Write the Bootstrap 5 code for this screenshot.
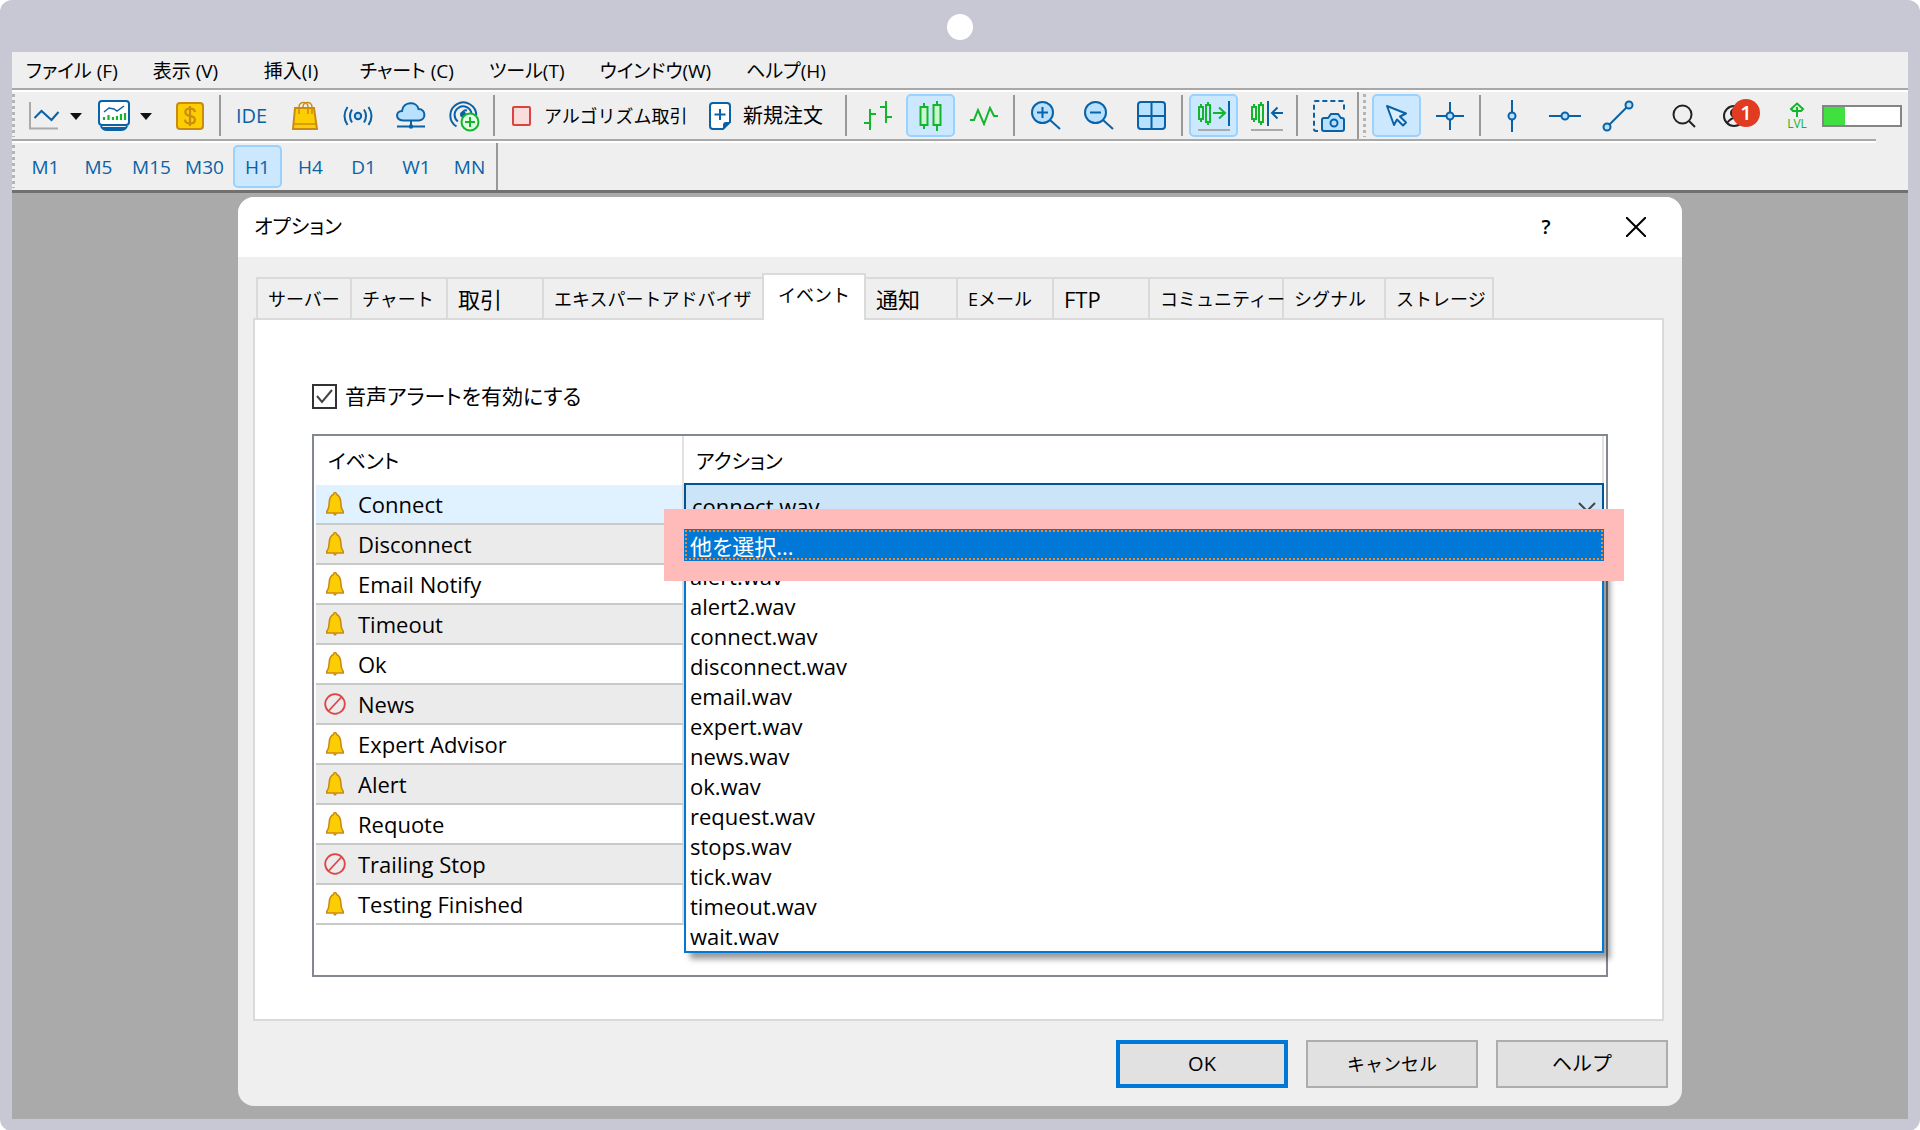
<!DOCTYPE html>
<html lang="ja">
<head>
<meta charset="utf-8">
<meta name="viewport" content="width=device-width, initial-scale=1">
<title>オプション</title>
<link rel="stylesheet" href="https://cdn.jsdelivr.net/npm/bootstrap@5.3.0/dist/css/bootstrap.min.css">
<style>
:root { --ui-blue: #0a62a6; --ui-face: #efefef; --ui-accent: #0078d7; }
body { background: #fff; color: #000; font-family: "Open Sans", "Noto Sans CJK JP", sans-serif; font-size: 20px; line-height: 30px; font-feature-settings: "palt"; }
button { color: inherit; }
svg { display: block; flex: none; }
.device { background: #c8c7d4; border-radius: 12px; padding: 0 12px 12px; }
.device-top { height: 52px; padding-top: 2px; }
.camera-dot { width: 26px; height: 26px; }
.screen { background: #aaa; }
.menubar { background: var(--ui-face); height: 36px; padding: 2px 14px 0; gap: 35px; font-size: 19px; }
.menubar a { color: #000; text-decoration: none; white-space: nowrap; }
.menubar .menu-view { min-width: 76px; }
.menubar .menu-insert { min-width: 61px; }
.toolrow { background: linear-gradient(#a8a8a8, #a8a8a8) 0 0 / 100% 2px no-repeat, linear-gradient(#fff, #fff) 0 2px / 100% 2px no-repeat, var(--ui-face); height: 51px; padding-top: 4px; }
.toolrow-short { background-size: calc(100% - 32px) 2px, calc(100% - 32px) 2px, auto; }
.toolrow-last { border-bottom: 3px solid #707070; height: 54px; }
.toolrow-last .tool { font-size: 19px; }
.grip { width: 3px; height: 43px; background: repeating-linear-gradient(#b4b4b4 0 3px, transparent 3px 6px); }
.tool { width: 49px; height: 43px; margin: 0 2px; padding: 0; border: 2px solid transparent; border-radius: 5px; background: none; display: flex; align-items: center; justify-content: center; flex: none; color: var(--ui-blue); white-space: nowrap; }
.tool.is-on { background: #cce8ff; border-color: #99d1ff; }
.tool-drop { width: 66px; justify-content: flex-start; padding-left: 1px; gap: 10px; }
.tool-text { color: #000; justify-content: flex-start; padding-left: 8px; gap: 10px; }
.tool-algo { width: 192px; padding-left: 9px; gap: 12px; font-size: 18px; }
.tool-order { width: 143px; padding-left: 10px; }
.vsep { width: 2px; height: 41px; background: #999; margin: 0 4px 0 3px; flex: none; }
.vsep-full { height: 47px; margin: 0 4px 0 2px; }
.note-badge { width: 28px; height: 28px; background: #e13b22; left: 18px; top: 3px; line-height: 28px; font-weight: 600; }
.lvl { color: #12b52c; font-size: 12px; line-height: 12px; width: 30px; margin: 0 10px 0 19px; }
.meter { width: 80px; height: 22px; border: 2px solid #858585; border-radius: 0; background: #fff; margin-right: 6px; }
.meter .progress-bar { background: #40e040; width: 27%; }
.workspace { padding: 4px 0 13px; }
.dialog { width: 100%; max-width: 1444px; background: var(--ui-face); border-radius: 16px; overflow: hidden; }
.dialog-title { background: #fff; height: 60px; padding: 0 36px 0 16px; }
.title-btn { border: 0; background: none; padding: 0; width: 20px; height: 30px; }
.title-actions { gap: 70px; }
.tabs { padding: 16px 0 0 3px; margin: 0 18px 0 15px; }
.tab { height: 41px; border: 2px solid #dadada; border-width: 2px 2px 0 0; background: var(--ui-face); padding: 0 0 0 10px; text-align: left; white-space: nowrap; flex: none; font-size: 18px; }
.tab-wide { font-size: 22px; }
.tab:first-child { border-left-width: 2px; }
.tab.active { height: 47px; margin: 0 0 -2px -2px; padding: 0 10px 6px 14px; background: #fff; border-left-width: 2px; position: relative; }
.w-a { width: 96px; } .w-b { width: 220px; } .w-c { width: 104px; } .w-d { width: 92px; } .w-e { width: 134px; } .w-f { width: 102px; } .w-g { width: 108px; }
.panel { background: #fff; border: 2px solid #dadada; margin: 0 18px 0 15px; padding: 64px 54px 42px 57px; }
.alert-check { width: 25px; height: 25px; margin: 0; border: 2px solid #333; border-radius: 0 !important; background-color: #fff; }
.alert-check:checked { background-color: #fff; border-color: #333; background-image: url("data:image/svg+xml,%3Csvg xmlns='http://www.w3.org/2000/svg' viewBox='0 0 21 21'%3E%3Cpath d='M3 10l5 6L18 4' fill='none' stroke='%23444' stroke-width='2'/%3E%3C/svg%3E"); background-size: 100%; }
.alert-label { font-size: 21px; }
.event-box { border: 2px solid #828790; min-height: 543px; margin-top: 25px; padding: 0 2px; }
.event-table { width: 100%; table-layout: fixed; border-collapse: separate; border-spacing: 0; font-size: 22px; }
.event-table th { height: 49px; font-weight: 400; font-size: 20px; padding: 2px 0 0 12px; border-right: 2px solid #e2e2e2; }
.event-table tbody td { height: 40px; padding: 0; border-bottom: 2px solid #c9c9c9; }
.event-table tbody td:first-child { border-right: 2px solid #dedede; padding-left: 8px; }
.event-table tbody tr:nth-child(even) td { background: #ebebeb; }
.event-table tbody tr:first-child td { background: #e0f1ff; }
.event-name { gap: 12px; line-height: 34px; }
.combo { left: 0; right: 0; top: -2px; font-size: 22px; }
.combo-select { width: 100%; height: 46px; border: 2px solid #005499; background: #cce4f7; padding: 0 6px; appearance: none; color: #000; display: block; }
.combo-arrow { right: 8px; top: 19px; pointer-events: none; }
.combo-list { border: 2px solid var(--ui-accent); background: #fff; box-shadow: 6px 6px 6px rgba(0,0,0,.4); }
.combo-list li { height: 30px; line-height: 31px; padding: 0 4px; }
.combo-list .picked { height: 32px; line-height: 34px; margin: -2px -2px 0; background: var(--ui-accent); color: #fff; box-shadow: 0 0 0 20px #ffbaba; position: relative; z-index: 1; padding: 0 6px; outline: 2px dotted #f08a30; outline-offset: -3px; }
.dlg-btn { width: 172px; height: 48px; background: #e1e1e1; border: 2px solid #adadad; border-radius: 0; padding: 0; }
.dlg-btn.is-default { border: 4px solid var(--ui-accent); }
.dlg-btn.is-cancel { font-size: 18px; }
.dialog-foot { gap: 18px; padding: 19px 14px 18px; }
</style>
<script src="https://cdn.jsdelivr.net/npm/bootstrap@5.3.0/dist/js/bootstrap.bundle.min.js"></script>
</head>
<body>
<svg width="0" height="0" class="position-absolute" aria-hidden="true">
  <symbol id="bell" viewBox="0 0 22 26"><path d="M11 1.500c1 0 1.500.8 1.600 1.900C15.500 4.500 16.700 7.500 16.800 12c.1 4 .6 6 2.400 8.500v1.500H2.800v-1.500C4.600 18 5.100 16 5.200 12 5.300 7.500 6.500 4.500 9.400 3.400 9.500 2.300 10 1.500 11 1.500z" fill="#fccd00" stroke="#c98c10" stroke-width="1.600"/><path d="M8.500 22.500h5L11 25z" fill="#c98c10"/></symbol>
  <symbol id="ban" viewBox="0 0 22 26"><circle cx="11" cy="13" r="9.800" fill="none" stroke="#e04545" stroke-width="1.800"/><path d="M4.500 20L17.500 6" stroke="#e04545" stroke-width="1.800"/></symbol>
</svg>
<div class="device">
  <div class="device-top d-flex align-items-center justify-content-center"><span class="camera-dot bg-white rounded-circle"></span></div>
  <div class="screen">
    <nav class="menubar d-flex align-items-center">
      <a href="#">ファイル (F)</a><a href="#" class="menu-view">表示 (V)</a><a href="#" class="menu-insert">挿入(I)</a><a href="#">チャート (C)</a><a href="#">ツール(T)</a><a href="#">ウインドウ(W)</a><a href="#">ヘルプ(H)</a>
    </nav>

    <div class="toolrow d-flex align-items-center">
      <span class="grip me-2"></span>
      <button class="tool tool-drop" aria-label="チャート種別"><svg width="32" height="32"><path d="M2 2v26.500h28" fill="none" stroke="#aaa" stroke-width="2"/><path d="M6.500 18l7-7 10 9 7-8" fill="none" stroke="#0a62a6" stroke-width="2"/></svg><svg width="12" height="8"><path d="M0 1h12L6 8z" fill="#111"/></svg></button>
      <button class="tool tool-drop" aria-label="インジケータ"><svg width="32" height="32"><rect x="1" y="1" width="30" height="24" rx="3" fill="#fff" stroke="#0a62a6" stroke-width="2"/><path d="M6 12l5-4 5 1 3 2 7-5" fill="none" stroke="#0a62a6" stroke-width="1.500"/><path d="M6 20v-3M10.500 20v-5M15 20v-3M19 20v-4M23 20v-6M27 20v-7" stroke="#12b52c" stroke-width="2.200"/><path d="M3 26c1 3 3 4 6 4h14c3 0 5-1 6-4M4 28h24" fill="none" stroke="#0a62a6" stroke-width="2"/></svg><svg width="12" height="8"><path d="M0 1h12L6 8z" fill="#111"/></svg></button>
      <button class="tool" aria-label="取引"><svg width="28" height="28"><rect x="1" y="1" width="26" height="26" rx="3" fill="#fccd00" stroke="#c98c10" stroke-width="2"/><path d="M19 10c-.5-2.500-2.500-3.500-5-3.500s-4.700 1.300-4.700 3.700c0 2.300 2 3.100 4.700 3.700 2.800.6 4.900 1.400 4.900 3.800s-2.200 3.800-4.900 3.800c-2.600 0-4.800-1.200-5.200-3.800M14 4v20" fill="none" stroke="#c98c10" stroke-width="2.200"/></svg></button>
      <span class="vsep"></span>
      <button class="tool">IDE</button>
      <button class="tool" aria-label="マーケット"><svg width="26" height="30"><path d="M3 7h19l3 21H1z" fill="#fccd00" stroke="#c98c10" stroke-width="2"/><path d="M7 13V6c0-6 9-6 9 0v7M11 8V6c0-6 9-6 9 0v7M2 23h22" fill="none" stroke="#c98c10" stroke-width="1.500"/></svg></button>
      <button class="tool" aria-label="シグナル"><svg width="30" height="20" fill="none" stroke="#0a62a6" stroke-width="2"><circle cx="15" cy="10" r="3.200" fill="#b8e0ff"/><path d="M9 3.500q-4 6.500 0 13M21 3.500q4 6.500 0 13M4.500 1q-6 9 0 18M25.500 1q6 9 0 18"/></svg></button>
      <button class="tool" aria-label="VPS"><svg width="30" height="28"><path d="M7 18.500C-1 18-.5 9 6 9 7-1 21-1 22.500 7c7.500 0 8 11 .5 11.500z" fill="#b8e0ff" stroke="#0a62a6" stroke-width="2"/><path d="M15 19v4M1 24.500h28" stroke="#0a62a6" stroke-width="2"/><circle cx="15" cy="24.500" r="2.200" fill="#0a62a6"/></svg></button>
      <button class="tool" aria-label="コミュニティ"><svg width="32" height="32" fill="none" stroke="#0a62a6" stroke-width="2"><path d="M8.500 26.500a13 13 0 1 1 19.800-11M9.800 21.500a8.500 8.500 0 1 1 13.700-8M14 14.500a4 4 0 0 1 5-4"/><circle cx="15" cy="14.500" r="2" fill="#0a62a6"/><circle cx="22" cy="22" r="8.500" fill="#e2ffe6" stroke="#12b52c"/><path d="M22 17v10M17 22h10" stroke="#12b52c"/></svg></button>
      <span class="vsep"></span>
      <button class="tool tool-text tool-algo"><svg width="20" height="20"><rect x="1" y="1" width="17" height="18" rx="1" fill="#fbdcdc" stroke="#d9443f" stroke-width="2"/></svg>アルゴリズム取引</button>
      <button class="tool tool-text tool-order"><svg width="24" height="28"><path d="M4 1h14q3 0 3 3v16l-7 7H4q-3 0-3-3V4q0-3 3-3z" fill="#fff" stroke="#0a62a6" stroke-width="2"/><path d="M21 20l-7 7v-4q0-3 3-3z" fill="#0a62a6"/><path d="M11 7v11M5.500 12.500h11" stroke="#0a62a6" stroke-width="2"/></svg>新規注文</button>
      <span class="vsep"></span>
      <button class="tool" aria-label="バーチャート"><svg width="28" height="30" fill="none" stroke="#12b52c" stroke-width="2"><path d="M0 22h6M6 8v21M6 13h6M16 6h6M22 0v22M22 16h6"/></svg></button>
      <button class="tool is-on" aria-label="ローソク足"><svg width="24" height="30" fill="#c9f7cf" stroke="#12b52c" stroke-width="2"><path d="M5 2v26M18 0v30"/><rect x="1.500" y="6" width="7" height="18"/><rect x="14.500" y="4" width="7" height="20"/></svg></button>
      <button class="tool" aria-label="ラインチャート"><svg width="28" height="20" fill="none" stroke="#12b52c" stroke-width="2"><path d="M0 14h4l4-10 6 14 6-16 4 8h4"/></svg></button>
      <span class="vsep"></span>
      <button class="tool" aria-label="拡大"><svg width="30" height="30" fill="none" stroke="#0a62a6" stroke-width="2"><circle cx="11.500" cy="11.500" r="10.500" fill="#b8e0ff"/><path d="M19 19l10 9M6 11.500h11M11.500 6v11"/></svg></button>
      <button class="tool" aria-label="縮小"><svg width="30" height="30" fill="none" stroke="#0a62a6" stroke-width="2"><circle cx="11.500" cy="11.500" r="10.500" fill="#b8e0ff"/><path d="M19 19l10 9M6 11.500h11"/></svg></button>
      <button class="tool" aria-label="整列"><svg width="30" height="30" fill="none" stroke="#0a62a6" stroke-width="2"><rect x="1" y="1" width="27" height="27" rx="3" fill="#b8e0ff"/><path d="M14.500 1v27M1 15h27"/></svg></button>
      <span class="vsep"></span>
      <button class="tool is-on" aria-label="自動スクロール"><svg width="32" height="32" fill="none" stroke="#12b52c" stroke-width="2"><path d="M3 4v3M3 19v3M10 2v3M10 22v3M15 13h11M21 7.500l6 5.500-6 5.500"/><rect x="1" y="7" width="4" height="12"/><rect x="8" y="5" width="4" height="17"/><path d="M31 1v25" stroke="#0a62a6"/><path d="M0 30h32" stroke="#aaa"/></svg></button>
      <button class="tool" aria-label="チャートシフト"><svg width="32" height="32" fill="none" stroke="#12b52c" stroke-width="2"><path d="M3 4v3M3 19v3M10 2v3M10 22v3"/><rect x="1" y="7" width="4" height="12"/><rect x="8" y="5" width="4" height="17"/><path d="M17 1v25M32 13H21M26.500 7.500L21 13l5.500 5.500" stroke="#0a62a6"/><path d="M0 30h32" stroke="#aaa"/></svg></button>
      <span class="vsep"></span>
      <button class="tool" aria-label="スクリーンショット"><svg width="32" height="32" fill="none" stroke="#0a62a6" stroke-width="2"><path d="M5 31H3q-2 0-2-2V3q0-2 2-2h26q2 0 2 2v9" stroke-dasharray="5 3"/><path d="M11 18h4l3-4h7l3 4h1q2 0 2 2v9q0 2-2 2H11q-2 0-2-2v-9q0-2 2-2z" fill="#b8e0ff"/><circle cx="21" cy="23" r="3.500"/></svg></button>
      <span class="vsep vsep-full"></span><span class="grip me-1"></span>
      <button class="tool is-on" aria-label="カーソル"><svg width="24" height="24" fill="#d9eeff" stroke="#0a62a6" stroke-width="2" stroke-linejoin="round"><path d="M2 2l19 7.500-6 3 6 6-3 3-6-6-3 5.500z"/></svg></button>
      <button class="tool" aria-label="十字カーソル"><svg width="28" height="28" fill="#b8e0ff" stroke="#0a62a6" stroke-width="2"><path d="M14 0v28M0 14h28"/><circle cx="14" cy="14" r="3.500"/></svg></button>
      <span class="vsep"></span>
      <button class="tool" aria-label="垂直線"><svg width="32" height="32" fill="#b8e0ff" stroke="#0a62a6" stroke-width="2"><path d="M16 0v32"/><circle cx="16" cy="16" r="3.500"/></svg></button>
      <button class="tool" aria-label="水平線"><svg width="32" height="32" fill="#b8e0ff" stroke="#0a62a6" stroke-width="2"><path d="M0 16h32"/><circle cx="16" cy="16" r="3.500"/></svg></button>
      <button class="tool" aria-label="トレンドライン"><svg width="32" height="32" fill="#b8e0ff" stroke="#0a62a6" stroke-width="2"><path d="M5 27L27 5"/><circle cx="5" cy="27" r="3.500"/><circle cx="27" cy="5" r="3.500"/></svg></button>
      <div class="ms-auto d-flex align-items-center">
        <button class="tool" aria-label="検索"><svg width="24" height="24" fill="none" stroke="#222" stroke-width="2"><circle cx="10.500" cy="10.500" r="9"/><path d="M17 17l6 6"/></svg></button>
        <button class="tool position-relative" aria-label="通知 1"><svg width="28" height="24" fill="none" stroke="#222" stroke-width="2"><circle cx="11" cy="12" r="10"/><circle cx="12" cy="9" r="4"/><path d="M4 19q8-10 14 0"/></svg><span class="note-badge position-absolute rounded-circle text-white">1</span></button>
        <div class="lvl d-flex flex-column align-items-center"><svg width="16" height="16" fill="#d9f9dd" stroke="#12b52c" stroke-width="2"><path d="M8 1.500L14 7l-2 2H4L2 7z"/><path d="M8 5v10"/></svg>LVL</div>
        <div class="progress meter"><div class="progress-bar"></div></div>
      </div>
    </div>

    <div class="toolrow toolrow-short toolrow-last d-flex align-items-center">
      <span class="grip me-1"></span>
      <button class="tool">M1</button><button class="tool">M5</button><button class="tool">M15</button><button class="tool">M30</button><button class="tool is-on">H1</button><button class="tool">H4</button><button class="tool">D1</button><button class="tool">W1</button><button class="tool">MN</button>
      <span class="vsep vsep-full ms-0"></span>
    </div>

    <main class="workspace">
      <section class="dialog mx-auto" role="dialog" aria-labelledby="dlgTitle">
        <header class="dialog-title d-flex align-items-center justify-content-between">
          <span id="dlgTitle">オプション</span>
          <div class="title-actions d-flex">
            <button class="title-btn fw-semibold">?</button>
            <button class="title-btn d-flex align-items-center" aria-label="閉じる"><svg width="20" height="20"><path d="M0 0l20 20M20 0L0 20" stroke="#000" stroke-width="2"/></svg></button>
          </div>
        </header>
        <div class="tabs d-flex align-items-end" role="tablist">
          <button class="tab w-a" role="tab">サーバー</button><button class="tab w-a" role="tab">チャート</button><button class="tab tab-wide w-a" role="tab">取引</button><button class="tab w-b" role="tab">エキスパートアドバイザ</button><button class="tab w-c active" role="tab" aria-selected="true">イベント</button><button class="tab tab-wide w-d" role="tab">通知</button><button class="tab w-a" role="tab">Eメール</button><button class="tab tab-wide w-a" role="tab">FTP</button><button class="tab w-e" role="tab">コミュニティー</button><button class="tab w-f" role="tab">シグナル</button><button class="tab w-g" role="tab">ストレージ</button>
        </div>
        <div class="panel">
          <div class="d-flex align-items-center gap-2 lh-1">
            <input class="form-check-input alert-check" type="checkbox" id="snd" checked>
            <label class="alert-label" for="snd">音声アラートを有効にする</label>
          </div>
          <div class="event-box">
            <table class="event-table">
              <colgroup><col style="width:368px"><col></colgroup>
              <thead><tr><th scope="col">イベント</th><th scope="col">アクション</th></tr></thead>
              <tbody>
                <tr><td><div class="event-name d-flex align-items-center"><svg width="22" height="26"><use href="#bell"/></svg>Connect</div></td>
                  <td class="position-relative">
                    <div class="combo position-absolute">
                      <select class="combo-select" aria-label="アクション"><option>connect.wav</option></select>
                      <svg class="combo-arrow position-absolute" width="18" height="12"><path d="M1 1l8 8 8-8" fill="none" stroke="#444" stroke-width="2"/></svg>
                      <ul class="combo-list list-unstyled m-0" role="listbox">
                        <li class="picked" role="option" aria-selected="true">他を選択...</li>
                        <li role="option">alert.wav</li><li role="option">alert2.wav</li><li role="option">connect.wav</li><li role="option">disconnect.wav</li><li role="option">email.wav</li><li role="option">expert.wav</li><li role="option">news.wav</li><li role="option">ok.wav</li><li role="option">request.wav</li><li role="option">stops.wav</li><li role="option">tick.wav</li><li role="option">timeout.wav</li><li role="option">wait.wav</li>
                      </ul>
                    </div>
                  </td></tr>
                <tr><td><div class="event-name d-flex align-items-center"><svg width="22" height="26"><use href="#bell"/></svg>Disconnect</div></td><td></td></tr>
                <tr><td><div class="event-name d-flex align-items-center"><svg width="22" height="26"><use href="#bell"/></svg>Email Notify</div></td><td></td></tr>
                <tr><td><div class="event-name d-flex align-items-center"><svg width="22" height="26"><use href="#bell"/></svg>Timeout</div></td><td></td></tr>
                <tr><td><div class="event-name d-flex align-items-center"><svg width="22" height="26"><use href="#bell"/></svg>Ok</div></td><td></td></tr>
                <tr><td><div class="event-name d-flex align-items-center"><svg width="22" height="26"><use href="#ban"/></svg>News</div></td><td></td></tr>
                <tr><td><div class="event-name d-flex align-items-center"><svg width="22" height="26"><use href="#bell"/></svg>Expert Advisor</div></td><td></td></tr>
                <tr><td><div class="event-name d-flex align-items-center"><svg width="22" height="26"><use href="#bell"/></svg>Alert</div></td><td></td></tr>
                <tr><td><div class="event-name d-flex align-items-center"><svg width="22" height="26"><use href="#bell"/></svg>Requote</div></td><td></td></tr>
                <tr><td><div class="event-name d-flex align-items-center"><svg width="22" height="26"><use href="#ban"/></svg>Trailing Stop</div></td><td></td></tr>
                <tr><td><div class="event-name d-flex align-items-center"><svg width="22" height="26"><use href="#bell"/></svg>Testing Finished</div></td><td></td></tr>
              </tbody>
            </table>
          </div>
        </div>
        <footer class="dialog-foot d-flex justify-content-end">
          <button class="dlg-btn is-default">OK</button><button class="dlg-btn is-cancel">キャンセル</button><button class="dlg-btn">ヘルプ</button>
        </footer>
      </section>
    </main>
  </div>
</div>
</body>
</html>
